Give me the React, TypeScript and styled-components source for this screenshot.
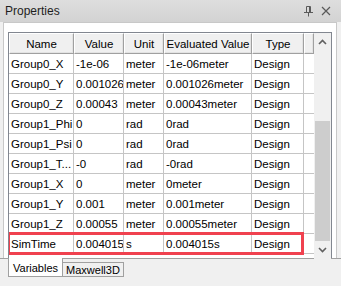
import React from 'react';
import styled, { createGlobalStyle } from 'styled-components';

const GlobalStyle = createGlobalStyle`
  html, body {
    margin: 0;
    padding: 0;
    background: #f0f0f0;
  }
  body {
    font-family: "Liberation Sans", Arial, sans-serif;
    font-size: 11px;
    color: #000;
  }
`;

const colWidths = [65, 50, 40, 88, 52];

const Root = styled.div`
  width: 341px;
  height: 286px;
  overflow: hidden;
  background: #f0f0f0;
`;

const TitleBar = styled.div`
  height: 22px;
  display: flex;
  align-items: center;
  padding: 0 6px 0 5px;
  background: linear-gradient(#dedede, #d3d3d3);
`;

const Title = styled.div`
  flex: 1;
  font-size: 12px;
  color: #1e1e1e;
`;

const TitleButton = styled.div`
  width: 18px;
  height: 18px;
  display: flex;
  align-items: center;
  justify-content: center;
`;

const Panel = styled.div`
  margin: 0 4px 0 3px;
  height: 236px;
  border: 1px solid #c8c8c8;
  border-bottom: none;
  background: #ffffff;
  padding: 9px 4px 0 4px;
  box-sizing: border-box;
`;

const Grid = styled.div`
  height: 227px;
  border: 1px solid #828790;
  border-bottom: none;
  display: flex;
  box-sizing: border-box;
`;

const Body = styled.div`
  flex: 1;
  overflow: hidden;
`;

const Row = styled.div<{ $header?: boolean }>`
  position: relative;
  display: grid;
  grid-template-columns: ${colWidths.map((w) => `${w}px`).join(' ')} 1fr;
  height: ${(p) => (p.$header ? '21px' : '20px')};
  background: ${(p) => (p.$header ? '#f0f0f0' : '#ffffff')};
`;

const HeaderCell = styled.div`
  display: flex;
  align-items: center;
  justify-content: center;
  border-top: 1px solid #ffffff;
  border-left: 1px solid #ffffff;
  border-right: 1px solid #a0a0a0;
  border-bottom: 1px solid #a0a0a0;
  box-shadow: inset -1px -1px 0 #e3e3e3;
  font-size: 11.5px;
  white-space: nowrap;
  box-sizing: border-box;
`;

const Cell = styled.div`
  display: flex;
  align-items: center;
  padding-left: 2px;
  border-right: 1px solid #c5c5c5;
  border-bottom: 1px solid #c5c5c5;
  white-space: nowrap;
  overflow: hidden;
  box-sizing: border-box;
  font-size: 11.5px;
`;

const Filler = styled.div`
  border-bottom: 1px solid #c5c5c5;
`;

const Highlight = styled.div`
  position: absolute;
  left: -2px;
  top: -2px;
  width: 297px;
  height: 23px;
  border: 3px solid #f0414f;
  box-sizing: border-box;
  pointer-events: none;
`;

const Scrollbar = styled.div`
  width: 17px;
  display: flex;
  flex-direction: column;
  background: #f0f0f0;
`;

const ScrollButton = styled.div`
  height: 20px;
  display: flex;
  align-items: center;
  justify-content: center;
`;

const Track = styled.div`
  flex: 1;
  display: flex;
  flex-direction: column;
  padding: 0 1px;
`;

const Thumb = styled.div<{ $offset: number; $size: number }>`
  margin-top: ${(p) => p.$offset}px;
  height: ${(p) => p.$size}px;
  background: #cdcdcd;
`;

const TabStrip = styled.div`
  display: flex;
  align-items: flex-start;
  padding-left: 8px;
  border-top: 1px solid #a0a0a0;
`;

const Tab = styled.div<{ $active?: boolean }>`
  height: ${(p) => (p.$active ? '19px' : '15px')};
  margin-top: ${(p) => (p.$active ? '-1px' : '3px')};
  padding: ${(p) => (p.$active ? '2px 4px 0' : '0 3px')};
  display: flex;
  align-items: center;
  font-size: 11px;
  background: ${(p) => (p.$active ? '#ffffff' : '#f0f0f0')};
  border: 1px solid #a0a0a0;
  border-top: ${(p) => (p.$active ? 'none' : '1px solid #a0a0a0')};
  border-left: ${(p) => (p.$active ? '1px solid #a0a0a0' : 'none')};
  box-sizing: border-box;
`;

const Arrow = ({ up }: { up?: boolean }) => (
  <svg width="9" height="6" viewBox="0 0 9 6">
    <path
      d={up ? 'M1 5 L4.5 1.5 L8 5' : 'M1 1 L4.5 4.5 L8 1'}
      fill="none"
      stroke="#606060"
      strokeWidth="1.6"
    />
  </svg>
);

const PinIcon = () => (
  <svg width="11" height="11" viewBox="0 0 11 11">
    <path d="M3.5 0.5 H7.5 V6.5 H3.5 Z" fill="none" stroke="#5a5a5a" />
    <path d="M6.5 0.5 V6.5" stroke="#5a5a5a" />
    <path d="M1 6.5 H10" stroke="#5a5a5a" />
    <path d="M5.5 6.5 V10.5" stroke="#5a5a5a" />
  </svg>
);

const CloseIcon = () => (
  <svg width="10" height="10" viewBox="0 0 10 10">
    <path d="M1 1 L9 9 M9 1 L1 9" stroke="#5a5a5a" strokeWidth="1.2" />
  </svg>
);

const rows = [
  ['Group0_X', '-1e-06', 'meter', '-1e-06meter'],
  ['Group0_Y', '0.001026', 'meter', '0.001026meter'],
  ['Group0_Z', '0.00043', 'meter', '0.00043meter'],
  ['Group1_Phi', '0', 'rad', '0rad'],
  ['Group1_Psi', '0', 'rad', '0rad'],
  ['Group1_T...', '-0', 'rad', '-0rad'],
  ['Group1_X', '0', 'meter', '0meter'],
  ['Group1_Y', '0.001', 'meter', '0.001meter'],
  ['Group1_Z', '0.00055', 'meter', '0.00055meter'],
  ['SimTime', '0.004015', 's', '0.004015s'],
];

export default function App() {
  return (
    <Root>
      <GlobalStyle />
      <TitleBar>
        <Title>Properties</Title>
        <TitleButton>
          <PinIcon />
        </TitleButton>
        <TitleButton>
          <CloseIcon />
        </TitleButton>
      </TitleBar>
      <Panel>
        <Grid>
          <Body>
            <Row $header>
              {['Name', 'Value', 'Unit', 'Evaluated Value', 'Type', ''].map((h, i) => (
                <HeaderCell key={i}>{h}</HeaderCell>
              ))}
            </Row>
            {rows.map((r) => (
              <Row key={r[0]}>
                <Cell>{r[0]}</Cell>
                <Cell>{r[1]}</Cell>
                <Cell>{r[2]}</Cell>
                <Cell>{r[3]}</Cell>
                <Cell>Design</Cell>
                <Filler />
                {r[0] === 'SimTime' && <Highlight />}
              </Row>
            ))}
          </Body>
          <Scrollbar>
            <ScrollButton>
              <Arrow up />
            </ScrollButton>
            <Track>
              <Thumb $offset={70} $size={120} />
            </Track>
            <ScrollButton>
              <Arrow />
            </ScrollButton>
          </Scrollbar>
        </Grid>
      </Panel>
      <TabStrip>
        <Tab $active>Variables</Tab>
        <Tab>Maxwell3D</Tab>
      </TabStrip>
    </Root>
  );
}
